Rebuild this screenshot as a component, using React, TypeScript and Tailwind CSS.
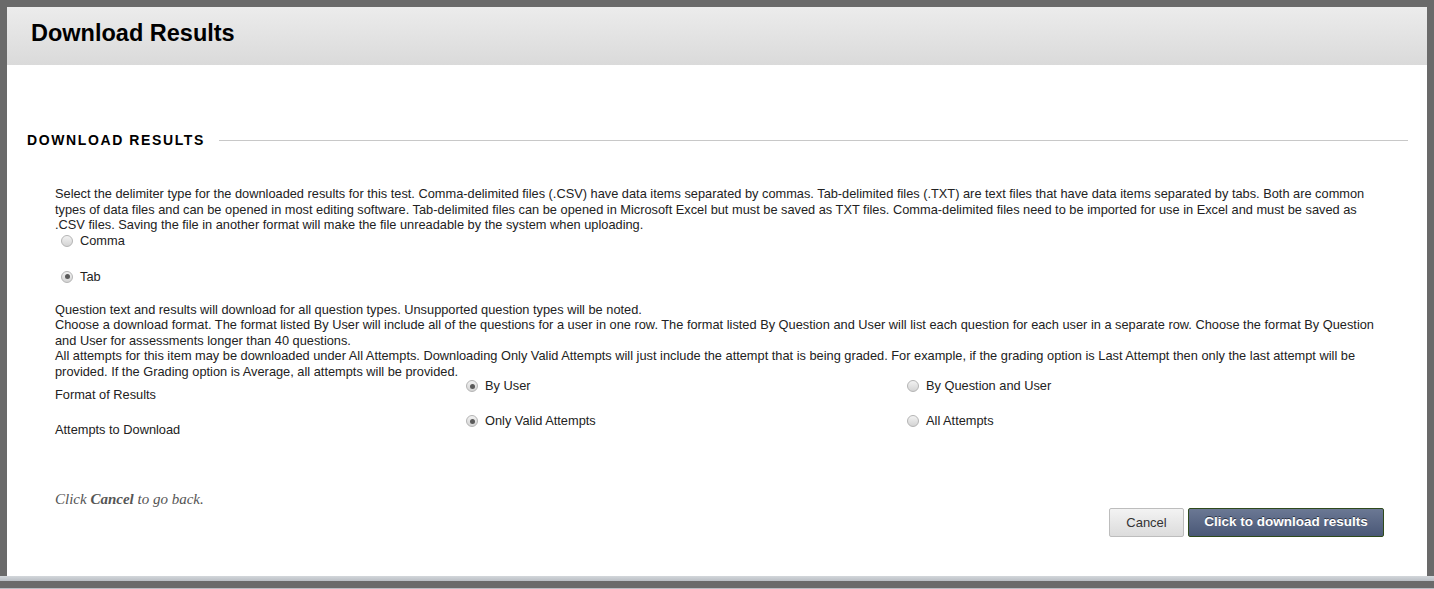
import React from "react";

const sans = "font-['Liberation_Sans',Arial,sans-serif]";

const Radio = ({ checked }: { checked?: boolean }) => (
  <span className="inline-flex h-[12px] w-[12px] shrink-0 items-center justify-center rounded-full border border-[#b4b4b4] bg-gradient-to-b from-[#f2f2f2] to-[#d4d4d4]">
    {checked && <span className="h-[5px] w-[5px] rounded-full bg-[#5a5a5a]" />}
  </span>
);

const Option = ({ label, checked }: { label: string; checked?: boolean }) => (
  <div className="flex h-[14px] items-center gap-[7px]">
    <Radio checked={checked} />
    <span>{label}</span>
  </div>
);

export default function App() {
  return (
    <div className={`h-[589px] w-[1434px] overflow-hidden bg-[#6a6a6a] pt-[7px] ${sans}`}>
      <div className="mx-[7px] flex h-[569px] flex-col bg-white">
        <div className="h-[58px] bg-gradient-to-b from-[#ececec] to-[#dadada] pl-[24px] pt-[12px]">
          <h1 className="text-[23.5px] font-bold leading-[28px] text-black">Download Results</h1>
        </div>

        <div className="mt-[67px] flex h-[16px] items-center pl-[20px] pr-[19px]">
          <h2 className="text-[14px] font-bold leading-[16px] tracking-[0.115em] text-black">DOWNLOAD RESULTS</h2>
          <div className="ml-[14px] h-px flex-1 bg-[#c8c8c8]" />
        </div>

        <div className="ml-[48px] w-[1326px] text-[12.8px] leading-[15.5px] text-[#222]">
          <p className="mt-[38px]">
            Select the delimiter type for the downloaded results for this test. Comma-delimited files (.CSV) have data items separated by commas. Tab-delimited files (.TXT) are text files that have data items separated by tabs. Both are common types of data files and can be opened in most editing software. Tab-delimited files can be opened in Microsoft Excel but must be saved as TXT files. Comma-delimited files need to be imported for use in Excel and must be saved as .CSV files. Saving the file in another format will make the file unreadable by the system when uploading.
          </p>
          <div className="ml-[6px] flex h-[16px] items-center">
            <Option label="Comma" />
          </div>
          <div className="ml-[6px] mt-[20px] flex h-[16px] items-center">
            <Option label="Tab" checked />
          </div>

          <div className="mt-[17px]">
            <p>Question text and results will download for all question types. Unsupported question types will be noted.</p>
            <p>
              Choose a download format. The format listed By User will include all of the questions for a user in one row. The format listed By Question and User will list each question for each user in a separate row. Choose the format By Question and User for assessments longer than 40 questions.
            </p>
            <p>
              All attempts for this item may be downloaded under All Attempts. Downloading Only Valid Attempts will just include the attempt that is being graded. For example, if the grading option is Last Attempt then only the last attempt will be provided. If the Grading option is Average, all attempts will be provided.
            </p>
          </div>

          <div className="grid grid-cols-[411px_441px_1fr] text-[#222]">
            <div className="flex h-[35px] items-start pt-[9px]">
              <span className="flex h-[14px] items-center">Format of Results</span>
            </div>
            <div>
              <Option label="By User" checked />
            </div>
            <div>
              <Option label="By Question and User" />
            </div>

            <div className="flex h-[35px] items-start pt-[9px]">
              <span className="flex h-[14px] items-center">Attempts to Download</span>
            </div>
            <div>
              <Option label="Only Valid Attempts" checked />
            </div>
            <div>
              <Option label="All Attempts" />
            </div>
          </div>

          <p className="mt-[42px] font-['Liberation_Serif',Georgia,serif] text-[15px] italic leading-[16px] text-[#555]">
            Click <span className="font-bold">Cancel</span> to go back.
          </p>
        </div>

        <div className="mt-[1px] flex justify-end gap-[4px] pr-[43px]">
          <button className="h-[29px] w-[75px] rounded-[2px] border border-[#bdbdbd] bg-gradient-to-b from-[#f3f3f3] to-[#dcdcdc] text-[13px] text-[#333]">
            Cancel
          </button>
          <button className="h-[29px] w-[196px] rounded-[2px] border border-[#2f4a1c] bg-gradient-to-b from-[#6b7894] to-[#4a5877] text-[13.5px] font-bold text-white [text-shadow:0_-1px_0_rgba(0,0,0,0.5)]">
            Click to download results
          </button>
        </div>
      </div>
      <div className="h-[5px] bg-gradient-to-b from-[#d3d7db] to-[#b9bec4]" />
      <div className="h-[7px] bg-[#6a6a6a]" />
      <div className="h-px bg-[#b8bcc2]" />
    </div>
  );
}
